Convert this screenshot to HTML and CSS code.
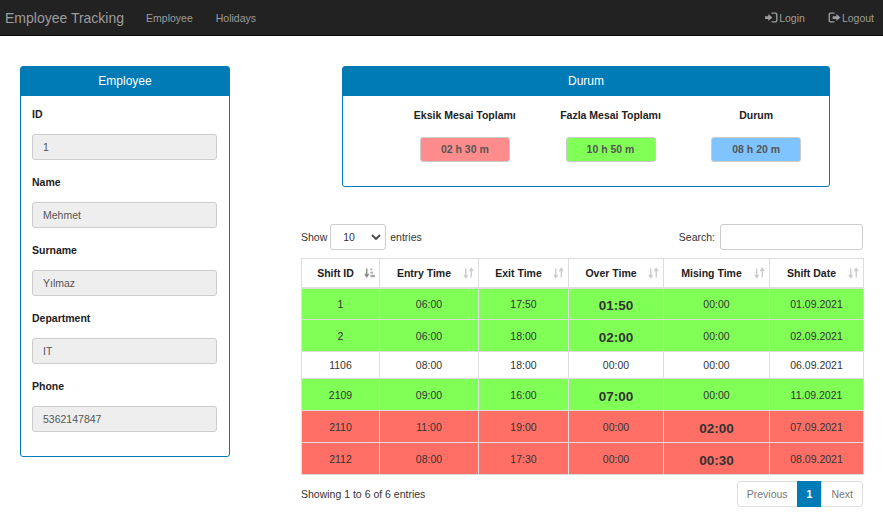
FILE: index.html
```html
<!DOCTYPE html>
<html lang="en">
<head>
  <meta charset="UTF-8">
  <title>Employee Tracking</title>
  <link rel="stylesheet" href="styles.css">
</head>
<body>
  <nav class="navbar">
    <a class="brand" href="#">Employee Tracking</a>
    <a class="nav-link" href="#">Employee</a>
    <a class="nav-link" href="#">Holidays</a>
    <div class="nav-right">
      <a class="nav-link" href="#">
        <svg class="nav-icon" viewBox="0 0 14 12"><path d="M0 4.5h3.5V2.2L8 6 3.500 9.800V7.500H0z"/><path d="M7 0.500h4.500A2 2 0 0 1 13.500 2.500v7a2 2 0 0 1-2 2H7V10h4.200a.8.800 0 0 0 .8-.8V2.800a.8.800 0 0 0-.8-.8H7z"/></svg>Login
      </a>
      <a class="nav-link" href="#">
        <svg class="nav-icon" viewBox="0 0 14 12"><path d="M7 .5H2.500a2 2 0 0 0-2 2v7a2 2 0 0 0 2 2H7V10H2.800a.8.800 0 0 1-.8-.8V2.800a.8.800 0 0 1 .8-.8H7z"/><path d="M5 4.500h4V2.200L13.500 6 9 9.800V7.500H5z"/></svg>Logout
      </a>
    </div>
  </nav>

  <div class="main">
    <div class="panel side-panel">
      <div class="panel-heading">Employee</div>
      <div class="panel-body">
        <label class="field-label">ID</label>
        <div class="field-value">1</div>
        <label class="field-label">Name</label>
        <div class="field-value">Mehmet</div>
        <label class="field-label">Surname</label>
        <div class="field-value">Yılmaz</div>
        <label class="field-label">Department</label>
        <div class="field-value">IT</div>
        <label class="field-label">Phone</label>
        <div class="field-value">5362147847</div>
      </div>
    </div>

    <div class="content">
      <div class="panel status-panel">
        <div class="panel-heading">Durum</div>
        <div class="status-row">
          <div class="status-col">
            <div class="status-title">Eksik Mesai Toplamı</div>
            <div class="status-box box-red">02 h 30 m</div>
          </div>
          <div class="status-col">
            <div class="status-title">Fazla Mesai Toplamı</div>
            <div class="status-box box-green">10 h 50 m</div>
          </div>
          <div class="status-col">
            <div class="status-title">Durum</div>
            <div class="status-box box-blue">08 h 20 m</div>
          </div>
        </div>
      </div>

      <div class="table-top">
        <div class="length-ctl">
          Show
          <div class="fake-select">10
            <svg class="select-arrow" viewBox="0 0 10 6"><path d="M1 1l4 4 4-4" fill="none" stroke="#444" stroke-width="1.800"/></svg>
          </div>
          entries
        </div>
        <div class="search-ctl">Search: <input type="text" class="search-input"></div>
      </div>

      <table class="shift-table">
        <colgroup>
          <col class="c1"><col class="c2"><col class="c3"><col class="c4"><col class="c5"><col class="c6">
        </colgroup>
        <thead>
          <tr>
            <th>Shift ID <span class="sort sort-active">
              <svg viewBox="0 0 12 12"><path d="M3 1v8M1 7l2 3 2-3" fill="none" stroke="#888" stroke-width="1.500"/><path d="M7 1h2v2H7zM7 4.500h3v2H7zM7 8h5v2.500H7z" fill="#aaa"/></svg></span></th>
            <th>Entry Time <span class="sort"><svg viewBox="0 0 12 12"><path d="M3 1v9M1 8l2 3 2-3M9 11V2M7 4l2-3 2 3" fill="none" stroke="#ccc" stroke-width="1.500"/></svg></span></th>
            <th>Exit Time <span class="sort"><svg viewBox="0 0 12 12"><path d="M3 1v9M1 8l2 3 2-3M9 11V2M7 4l2-3 2 3" fill="none" stroke="#ccc" stroke-width="1.500"/></svg></span></th>
            <th>Over Time <span class="sort"><svg viewBox="0 0 12 12"><path d="M3 1v9M1 8l2 3 2-3M9 11V2M7 4l2-3 2 3" fill="none" stroke="#ccc" stroke-width="1.500"/></svg></span></th>
            <th>Mising Time <span class="sort"><svg viewBox="0 0 12 12"><path d="M3 1v9M1 8l2 3 2-3M9 11V2M7 4l2-3 2 3" fill="none" stroke="#ccc" stroke-width="1.500"/></svg></span></th>
            <th>Shift Date <span class="sort"><svg viewBox="0 0 12 12"><path d="M3 1v9M1 8l2 3 2-3M9 11V2M7 4l2-3 2 3" fill="none" stroke="#ccc" stroke-width="1.500"/></svg></span></th>
          </tr>
        </thead>
        <tbody>
          <tr class="row-green"><td>1</td><td>06:00</td><td>17:50</td><td class="big">01:50</td><td>00:00</td><td>01.09.2021</td></tr>
          <tr class="row-green"><td>2</td><td>06:00</td><td>18:00</td><td class="big">02:00</td><td>00:00</td><td>02.09.2021</td></tr>
          <tr class="row-plain"><td>1106</td><td>08:00</td><td>18:00</td><td>00:00</td><td>00:00</td><td>06.09.2021</td></tr>
          <tr class="row-green"><td>2109</td><td>09:00</td><td>16:00</td><td class="big">07:00</td><td>00:00</td><td>11.09.2021</td></tr>
          <tr class="row-red"><td>2110</td><td>11:00</td><td>19:00</td><td>00:00</td><td class="big">02:00</td><td>07.09.2021</td></tr>
          <tr class="row-red"><td>2112</td><td>08:00</td><td>17:30</td><td>00:00</td><td class="big">00:30</td><td>08.09.2021</td></tr>
        </tbody>
      </table>

      <div class="table-bottom">
        <div class="info">Showing 1 to 6 of 6 entries</div>
        <div class="pager">
          <a class="page-btn" href="#">Previous</a>
          <a class="page-btn current" href="#">1</a>
          <a class="page-btn" href="#">Next</a>
        </div>
      </div>
    </div>
  </div>
</body>
</html>
```

FILE: styles.css
```css
* {
  box-sizing: border-box;
}

html, body {
  height: 100%;
}

body {
  margin: 0;
  overflow: hidden;
  background: #fff;
  color: #333;
  font-family: "Liberation Sans", Arial, sans-serif;
  font-size: 10.5px;
}

a {
  text-decoration: none;
}

.navbar {
  display: flex;
  align-items: center;
  height: 36px;
  background: #222;
  border-bottom: 1px solid #080808;
  padding: 0 9px 0 5px;
}

.brand {
  color: #9d9d9d;
  font-size: 14px;
  margin-right: 22px;
}

.nav-link {
  display: flex;
  align-items: center;
  color: #9d9d9d;
  margin-right: 23px;
}

.nav-right {
  display: flex;
  margin-left: auto;
}

.nav-right .nav-link {
  margin-right: 0;
  margin-left: 23px;
}

.nav-icon {
  width: 13px;
  height: 11px;
  fill: #9d9d9d;
  margin-right: 1px;
}

.main {
  display: flex;
  align-items: flex-start;
  padding: 30px 20px 0;
}

.panel {
  border: 1px solid #007bb5;
  border-radius: 3px;
  background: #fff;
}

.panel-heading {
  background: #007bb5;
  color: #fff;
  font-size: 12px;
  line-height: 29px;
  text-align: center;
}

.side-panel {
  width: 210px;
  height: 391px;
}

.panel-body {
  padding: 12px 12px 0 11px;
}

.field-label {
  display: block;
  font-weight: bold;
  color: #222;
  line-height: 12px;
  margin-bottom: 14px;
}

.field-value {
  height: 26px;
  line-height: 24px;
  background: #eee;
  border: 1px solid #ccc;
  border-radius: 3px;
  color: #555;
  padding: 0 10px;
  margin-bottom: 16px;
}

.content {
  width: 562px;
  margin-left: 71px;
}

.status-panel {
  width: 488px;
  height: 121px;
  margin-left: 41px;
}

.status-row {
  display: flex;
  padding: 13px 0 0 49px;
}

.status-col {
  width: 146px;
  text-align: center;
  font-weight: bold;
}

.status-col:nth-child(2) {
  width: 146px;
}

.status-title {
  color: #222;
  line-height: 12px;
  margin-bottom: 16px;
}

.status-box {
  width: 90px;
  height: 25px;
  line-height: 23px;
  margin: 0 auto;
  border: 1px solid #ccc;
  border-radius: 3px;
  color: #555;
}

.box-red {
  background: #ff8c8c;
}

.box-green {
  background: #80ff57;
}

.box-blue {
  background: #80c4ff;
}

.table-top {
  display: flex;
  justify-content: space-between;
  align-items: center;
  height: 26px;
  margin-top: 37px;
  margin-bottom: 8px;
}

.length-ctl, .search-ctl {
  display: flex;
  align-items: center;
}

.fake-select {
  position: relative;
  width: 56px;
  height: 26px;
  line-height: 24px;
  border: 1px solid #ccc;
  border-radius: 3px;
  padding-left: 12px;
  margin: 0 4px 0 3px;
}

.select-arrow {
  position: absolute;
  right: 4px;
  top: 9px;
  width: 10px;
  height: 6px;
}

.search-input {
  width: 143px;
  height: 26px;
  margin-left: 5px;
  border: 1px solid #ccc;
  border-radius: 3px;
}

.shift-table {
  width: 562px;
  table-layout: fixed;
  border-collapse: collapse;
  border: 1px solid #ddd;
}

.c1 { width: 78px; }
.c2 { width: 99px; }
.c3 { width: 90px; }
.c4 { width: 95px; }
.c5 { width: 106px; }
.c6 { width: 94px; }

.shift-table th {
  position: relative;
  height: 29px;
  border: 1px solid #ddd;
  border-bottom-width: 2px;
  color: #222;
  padding: 0 18px 0 8px;
  text-align: center;
}

.shift-table td {
  border: 1px solid #ddd;
  text-align: center;
  padding: 0;
}

.sort {
  position: absolute;
  right: 4px;
  top: 8px;
  width: 11px;
  height: 12px;
}

.sort svg {
  display: block;
  width: 100%;
  height: 100%;
}

.shift-table tbody tr {
  height: 32px;
}

.shift-table tbody tr.row-plain {
  height: 27px;
}

.row-green td {
  background: #80ff57;
}

.row-red td {
  background: #ff6f66;
}

.shift-table td.big {
  font-size: 13.500px;
  font-weight: bold;
  padding-top: 3px;
}

.table-bottom {
  display: flex;
  justify-content: space-between;
  margin-top: 6px;
}

.info {
  padding-top: 7px;
}

.pager {
  display: flex;
}

.page-btn {
  height: 26px;
  line-height: 24px;
  padding: 0 9px;
  border: 1px solid #ddd;
  margin-left: -1px;
  color: #777;
}

.page-btn:first-child {
  border-radius: 3px 0 0 3px;
}

.page-btn:last-child {
  border-radius: 0 3px 3px 0;
}

.page-btn.current {
  background: #007bb5;
  border-color: #007bb5;
  color: #fff;
  font-weight: bold;
}
```
